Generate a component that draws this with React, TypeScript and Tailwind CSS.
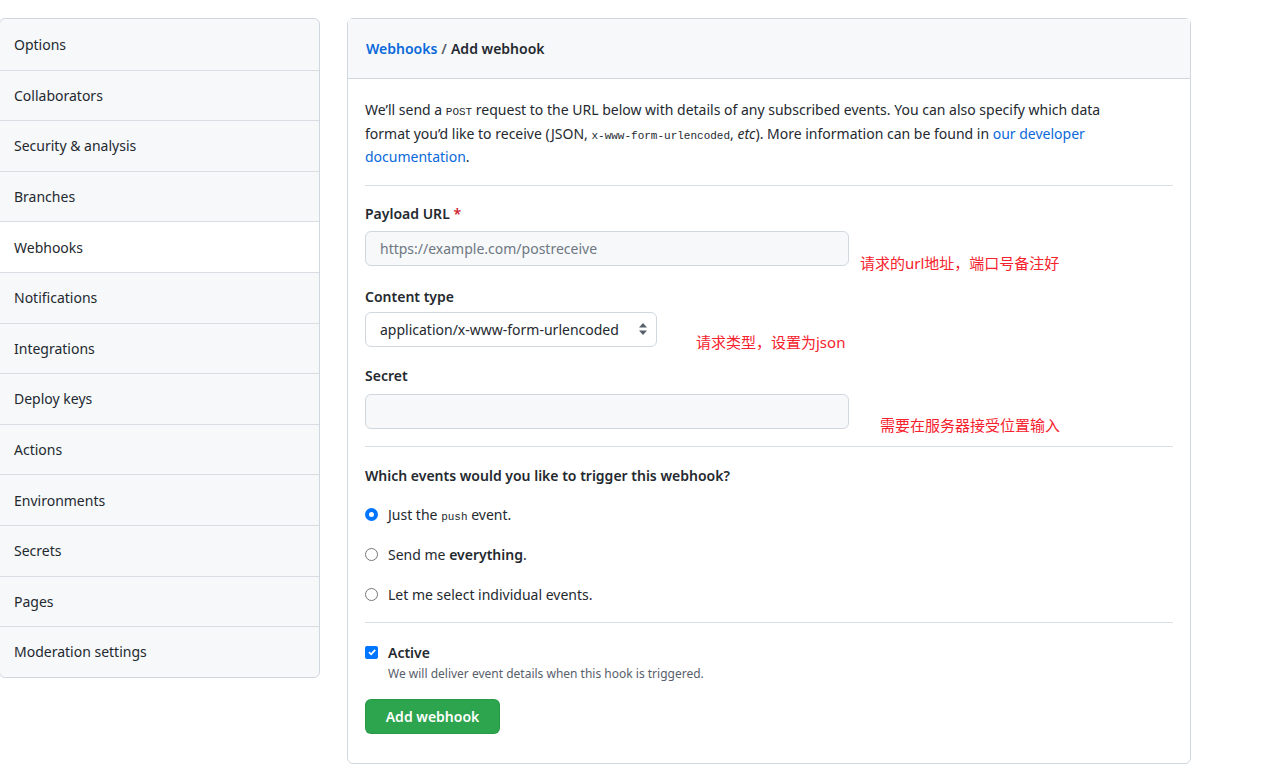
const items = [
  "Options",
  "Collaborators",
  "Security & analysis",
  "Branches",
  "Webhooks",
  "Notifications",
  "Integrations",
  "Deploy keys",
  "Actions",
  "Environments",
  "Secrets",
  "Pages",
  "Moderation settings",
];

const Radio = ({ checked }: { checked?: boolean }) =>
  checked ? (
    <span className="h-[13px] w-[13px] shrink-0 rounded-full border-[4px] border-[#0075ff] bg-white" />
  ) : (
    <span className="h-[13px] w-[13px] shrink-0 rounded-full border border-[#767676] bg-white" />
  );

export default function App() {
  return (
    <div
      className="relative min-h-[774px] bg-white text-[14px] text-[#24292f]"
      style={{ fontFamily: '"Noto Sans", "Noto Sans CJK SC", sans-serif' }}
    >
      <div className="flex items-start gap-[27px] pt-[18px]">
        {/* sidebar */}
        <nav className="-ml-px w-[321px] shrink-0 overflow-hidden rounded-md border border-[#d0d7de] bg-[#f6f8fa]">
          {items.map((it, i) => (
            <div
              key={it}
              className={`flex h-[50.6px] items-center pl-[14px] ${
                i > 0 ? "border-t border-[#d8dee4]" : ""
              } ${it === "Webhooks" ? "bg-white" : ""}`}
            >
              {it}
            </div>
          ))}
        </nav>

        {/* main */}
        <section className="w-[844px] rounded-md border border-[#d0d7de]">
          <header className="flex h-[60px] items-center border-b border-[#d0d7de] bg-[#f6f8fa] px-[18px] font-semibold">
            <span className="text-[#0969da]">Webhooks</span>
            <span className="ml-1 text-[#57606a]">/</span>
            <span className="ml-1">Add webhook</span>
          </header>

          <div className="px-[17px] pb-[29px]">
            <p className="mt-[19px] leading-[23.5px]">
              We’ll send a{" "}
              <span className="font-mono text-[11px] uppercase leading-none">post</span> request to the URL below
              with details of any subscribed events. You can also specify which data
              <br />
              format you’d like to receive (JSON,{" "}
              <code className="font-mono text-[11px] leading-none">x-www-form-urlencoded</code>, <em>etc</em>). More
              information can be found in <a className="text-[#0969da]">our developer</a>
              <br />
              <a className="text-[#0969da]">documentation</a>.
            </p>

            <hr className="mt-[16px] border-[#d8dee4]" />

            <label className="mt-[16px] block font-semibold leading-[24px]">
              Payload URL <span className="text-[#cf222e]">*</span>
            </label>
            <div className="mt-[5px] flex h-[35px] w-[484px] items-center rounded-md border border-[#d0d7de] bg-[#f6f8fa] px-[14px] text-[#6e7781]">
              https://example.com/postreceive
            </div>

            <label className="mt-[19px] block font-semibold leading-[24px]">Content type</label>
            <div className="mt-[3px] flex h-[35px] w-[292px] items-center justify-between rounded-md border border-[#d0d7de] bg-white pl-[14px] pr-[9px]">
              <span>application/x-www-form-urlencoded</span>
              <svg width="8" height="12" viewBox="0 0 8 12" fill="#57606a">
                <path d="M4 0 8 4.5H0z" />
                <path d="M4 12 0 7.5h8z" />
              </svg>
            </div>

            <label className="mt-[17px] block font-semibold leading-[24px]">Secret</label>
            <div className="mt-[6px] h-[35px] w-[484px] rounded-md border border-[#d0d7de] bg-[#f6f8fa]" />

            <hr className="mt-[17px] border-[#d8dee4]" />

            <h3 className="mt-[17px] font-semibold leading-[24px]">
              Which events would you like to trigger this webhook?
            </h3>
            <div className="mt-[15px] flex flex-col gap-[16px]">
              <div className="flex h-[24px] items-center gap-[10px]">
                <Radio checked />
                <span>
                  Just the <code className="font-mono text-[11px] leading-none">push</code> event.
                </span>
              </div>
              <div className="flex h-[24px] items-center gap-[10px]">
                <Radio />
                <span>
                  Send me <b className="font-semibold">everything</b>.
                </span>
              </div>
              <div className="flex h-[24px] items-center gap-[10px]">
                <Radio />
                <span>Let me select individual events.</span>
              </div>
            </div>

            <hr className="mt-[15px] border-[#d8dee4]" />

            <div className="mt-[22px] flex items-start gap-[10px]">
              <span className="mt-[1px] flex h-[13px] w-[13px] shrink-0 items-center justify-center rounded-[2px] bg-[#0075ff]">
                <svg width="10" height="10" viewBox="0 0 10 10" fill="none" stroke="#fff" strokeWidth="1.8">
                  <path d="M2 5.2 4.1 7.3 8.2 2.8" />
                </svg>
              </span>
              <div>
                <div className="-mt-[4px] font-semibold leading-[24px]">Active</div>
                <div className="text-[12px] leading-[18px] text-[#57606a]">
                  We will deliver event details when this hook is triggered.
                </div>
              </div>
            </div>

            <button className="mt-[16px] h-[35px] w-[135px] rounded-md border border-[#1f883d]/40 bg-[#2da44e] font-semibold text-white">
              Add webhook
            </button>
          </div>
        </section>
      </div>

      {/* annotations */}
      <span className="absolute left-[860px] top-[252px] text-[15px] text-[#f5222d]">
        请求的url地址，端口号备注好
      </span>
      <span className="absolute left-[696px] top-[331px] text-[15px] text-[#f5222d]">
        请求类型，设置为json
      </span>
      <span className="absolute left-[880px] top-[414px] text-[15px] text-[#f5222d]">
        需要在服务器接受位置输入
      </span>
    </div>
  );
}
